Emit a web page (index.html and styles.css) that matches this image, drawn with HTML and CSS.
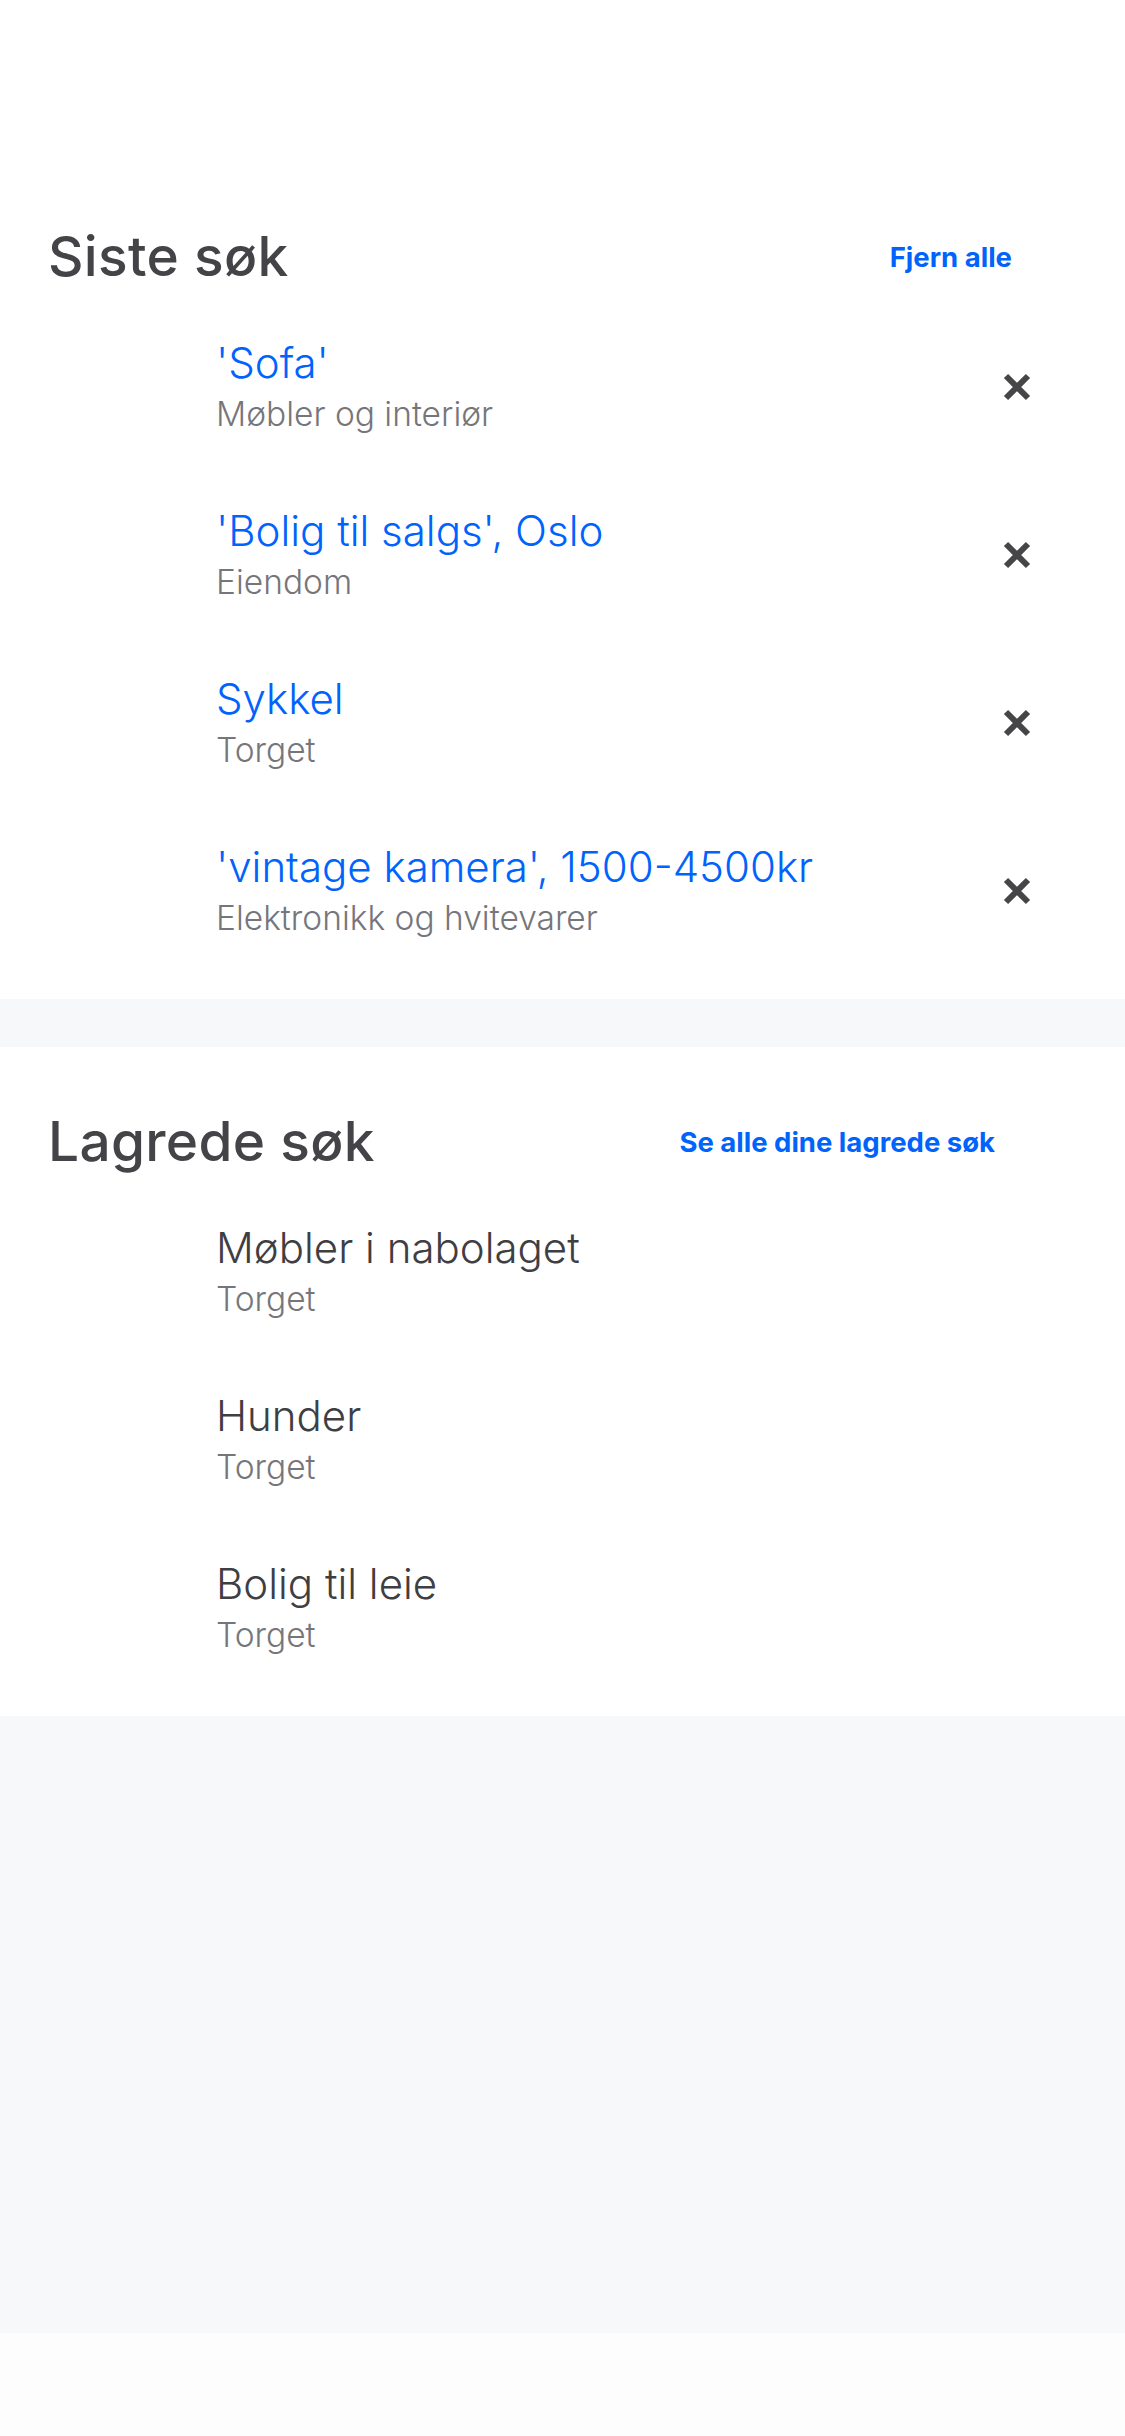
FILE: index.html
```html
<!DOCTYPE html>
<html lang="no">
<head>
<meta charset="utf-8">
<title>Søk</title>
<link rel="stylesheet" href="styles.css">
</head>
<body>
<div class="page">
  <div class="topbar"></div>

  <section class="section">
    <div class="section-head">
      <h2 class="section-title">Siste søk</h2>
      <a class="section-link section-link--clear" href="#">Fjern alle</a>
    </div>
    <ul class="list">
      <li class="row">
        <div class="row-text">
          <div class="row-title row-title--blue">'Sofa'</div>
          <div class="row-sub">Møbler og interiør</div>
        </div>
        <button class="row-remove" aria-label="Fjern">
          <svg width="30" height="30" viewBox="0 0 30 30"><path d="M4 4 L26 26 M26 4 L4 26" stroke="#464649" stroke-width="6" fill="none"/></svg>
        </button>
      </li>
      <li class="row">
        <div class="row-text">
          <div class="row-title row-title--blue">'Bolig til salgs', Oslo</div>
          <div class="row-sub">Eiendom</div>
        </div>
        <button class="row-remove" aria-label="Fjern">
          <svg width="30" height="30" viewBox="0 0 30 30"><path d="M4 4 L26 26 M26 4 L4 26" stroke="#464649" stroke-width="6" fill="none"/></svg>
        </button>
      </li>
      <li class="row">
        <div class="row-text">
          <div class="row-title row-title--blue">Sykkel</div>
          <div class="row-sub">Torget</div>
        </div>
        <button class="row-remove" aria-label="Fjern">
          <svg width="30" height="30" viewBox="0 0 30 30"><path d="M4 4 L26 26 M26 4 L4 26" stroke="#464649" stroke-width="6" fill="none"/></svg>
        </button>
      </li>
      <li class="row">
        <div class="row-text">
          <div class="row-title row-title--blue">'vintage kamera', 1500-4500kr</div>
          <div class="row-sub">Elektronikk og hvitevarer</div>
        </div>
        <button class="row-remove" aria-label="Fjern">
          <svg width="30" height="30" viewBox="0 0 30 30"><path d="M4 4 L26 26 M26 4 L4 26" stroke="#464649" stroke-width="6" fill="none"/></svg>
        </button>
      </li>
    </ul>
  </section>

  <div class="divider"></div>

  <section class="section">
    <div class="section-head">
      <h2 class="section-title">Lagrede søk</h2>
      <a class="section-link section-link--all" href="#">Se alle dine lagrede søk</a>
    </div>
    <ul class="list">
      <li class="row">
        <div class="row-text">
          <div class="row-title">Møbler i nabolaget</div>
          <div class="row-sub">Torget</div>
        </div>
      </li>
      <li class="row">
        <div class="row-text">
          <div class="row-title">Hunder</div>
          <div class="row-sub">Torget</div>
        </div>
      </li>
      <li class="row">
        <div class="row-text">
          <div class="row-title">Bolig til leie</div>
          <div class="row-sub">Torget</div>
        </div>
      </li>
    </ul>
  </section>

  <div class="filler"></div>
  <div class="bottom"></div>
</div>
</body>
</html>
```

FILE: styles.css
```css
* { box-sizing: border-box; }

html, body {
  margin: 0;
  padding: 0;
  background: #ffffff;
}

body {
  font-family: Inter, "Noto Sans", "Liberation Sans", sans-serif;
  color: #464649;
}

.page {
  width: 1125px;
  min-height: 2436px;
  display: flex;
  flex-direction: column;
}

.topbar {
  height: 162px;
  background: #ffffff;
}

.section {
  background: #ffffff;
  padding: 55px 0 24px;
}

.section-head {
  height: 72px;
  margin-bottom: 14px;
  display: flex;
  align-items: center;
  justify-content: space-between;
  padding-left: 48px;
}

.section-title {
  margin: 0;
  padding-top: 6px;
  font-size: 55px;
  line-height: 72px;
  font-weight: 500;
  color: #444448;
  letter-spacing: 0.3px;
}

.section-link {
  display: block;
  padding-top: 8px;
  font-size: 27.5px;
  line-height: 34px;
  font-weight: 700;
  color: #0063fb;
  text-decoration: none;
  letter-spacing: 0;
}

.section-link--clear { margin-right: 113px; }
.section-link--all { margin-right: 130px; }

.list {
  list-style: none;
  margin: 0;
  padding: 0;
}

.row {
  height: 168px;
  display: flex;
  align-items: center;
  padding-left: 216px;
  padding-right: 93px;
}

.row-text {
  flex: 1;
  display: flex;
  flex-direction: column;
}

.row-title {
  font-size: 42px;
  line-height: 50px;
  font-weight: 300;
  color: #3e3e43;
  letter-spacing: 0;
}

.row-title--blue { color: #0063fb; }

.row-sub {
  margin-top: 4px;
  font-size: 33.5px;
  line-height: 44px;
  font-weight: 300;
  color: #76767a;
  letter-spacing: 0;
}

.row-remove {
  width: 30px;
  height: 30px;
  padding: 0;
  border: 0;
  background: none;
  display: flex;
  align-items: center;
  justify-content: center;
}

.row-remove svg { display: block; }

.divider {
  height: 48px;
  background: #f7f8fa;
}

.filler {
  height: 617px;
  background: #f7f8fa;
}

.bottom {
  flex: 1;
  background: #fdfdfd;
}
```
